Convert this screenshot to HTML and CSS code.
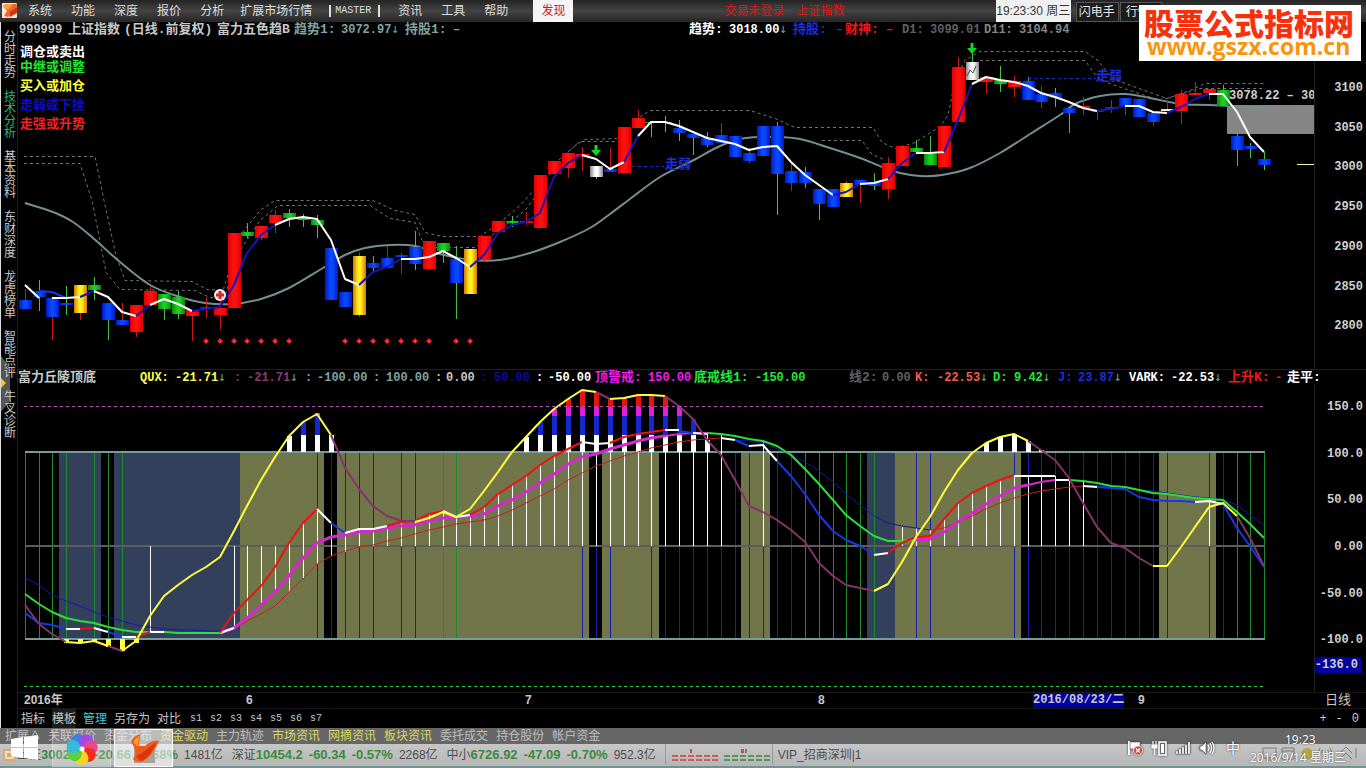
FILE: index.html
```html
<!DOCTYPE html>
<html lang="zh-CN">
<head>
<meta charset="utf-8">
<title>上证指数 日线</title>
<link rel="stylesheet" href="styles.css">
</head>
<body>
<div class="app">
  <header class="menubar">
    <svg class="brand" viewBox="0 0 16 16" aria-hidden="true"><rect width="15" height="15" rx="1" fill="#f6e6dc"/><path d="M1 3 4 1H15L14 9 6 14 2 13 5 8Z" fill="#f0642a"/><path d="M1 4 6 7 11 1 4 1Z" fill="#ffa03b"/><path d="M8 9 15 4V10L8 14Z" fill="#d63215"/></svg>
    <nav class="menu">
      <button>系统</button><button>功能</button><button>深度</button><button>报价</button><button>分析</button><button>扩展市场行情</button><button class="master">MASTER</button><button>资讯</button><button>工具</button><button>帮助</button><button class="found">发现</button>
      <span class="login first">交易未登录</span><span class="login">上证指数</span>
      <time class="now">19:23:30 周三</time>
      <button class="boxed">闪电手</button><button class="boxed">行情</button>
    </nav>
  </header>

  <aside class="watermark"><b>股票公式指标网</b><a href="#site">www.gszx.com.cn</a></aside>

  <div class="body">
    <nav class="side">
      <button>分时走势</button><button class="on">技术分析</button><button>基本资料</button><button>东财深度</button><button>龙虎榜单</button><button>智能点评</button><button>牛叉诊断</button>
      <span class="handle"></span>
    </nav>
    <main class="content">
      <div class="readout price-cols">
        <span>999999</span><span class="cj">上证指数</span><span class="cj">(日线.前复权)</span><span class="cj">富力五色趋B</span>
        <span class="cj teal">趋势1:</span><span class="teal">3072.97<i>↓</i></span><span class="cj teal">持股1:</span><span class="teal">–</span>
        <span class="cj white">趋势:</span><span class="white">3018.00<i>↓</i></span><span class="cj blue">持股:</span><span class="blue">–</span><span class="cj red">财神:</span><span class="red">–</span>
        <span class="dim">D1:</span><span class="dim">3099.01</span><span class="grey">D11:</span><span class="grey">3104.94</span>
      </div>
      <svg id="price" class="chart" viewBox="18 38 1348 332" role="img" aria-label="日线K线图"></svg>
      <div class="readout ind-cols">
        <span class="cj">富力丘陵顶底</span><span class="yellow">QUX:</span><span class="yellow">-21.71<i>↓</i></span><span class="plum">:</span><span class="plum">-21.71<i>↓</i></span><span class="teal">:</span><span class="teal">-100.00</span><span class="teal">:</span><span class="teal">100.00</span><span>:</span><span>0.00</span><span class="navy">:</span><span class="navy">50.00</span><span class="white">:</span><span class="white">-50.00</span>
        <span class="cj magenta">顶警戒:</span><span class="magenta">150.00</span><span class="cj green">底戒线1:</span><span class="green">-150.00</span><span class="cj dim">线2:</span><span class="dim">0.00</span><span class="coral">K:</span><span class="coral">-22.53<i>↓</i></span><span class="green">D:</span><span class="green">9.42<i>↓</i></span><span class="blue">J:</span><span class="blue">23.87<i>↓</i></span><span class="white">VARK:</span><span class="white">-22.53<i>↓</i></span><span class="cj red">上升K:</span><span class="red">-</span><span class="cj white">走平:</span>
      </div>
      <svg id="indicator" class="chart" viewBox="18 385 1348 307" role="img" aria-label="富力丘陵顶底指标"></svg>
      <div class="dates">
        <span>2016年</span><span>6</span><span>7</span><span>8</span><span class="picked">2016/08/23/二</span><span>9</span><span class="period">日线</span>
      </div>
      <div class="tabs">
        <nav class="tabset"><button>指标</button><button class="lit">模板</button><button class="cyan">管理</button><button>另存为</button><button>对比</button><button class="s">s1</button><button class="s">s2</button><button class="s">s3</button><button class="s">s4</button><button class="s">s5</button><button class="s">s6</button><button class="s">s7</button></nav>
        <div class="zoomers"><button>+</button><button>-</button><button>0</button></div>
      </div>
    </main>
  </div>

  <nav class="links">
    <button>扩展∧</button><button>关联报价</button><button>资金分布</button><button class="hot">资金驱动</button><button>主力轨迹</button><button class="hot">市场资讯</button><button class="hot">网摘资讯</button><button class="hot">板块资讯</button><button>委托成交</button><button>持仓股份</button><button>帐户资金</button>
  </nav>
  <footer class="status">
    <svg class="folder" viewBox="0 0 15 14" aria-hidden="true"><rect x="1" y="1" width="13" height="12" fill="#d2ac74"/><rect x="4" y="4" width="7" height="6" fill="none" stroke="#f1dcb8" stroke-width="2"/></svg>
    <span>上证</span><b>3002.85</b><b>-20.66</b><b>-0.68%</b><span>1481亿</span>
    <span>深证</span><b>10454.2</b><b>-60.34</b><b>-0.57%</b><span>2268亿</span>
    <span>中小</span><b>6726.92</b><b>-47.09</b><b>-0.70%</b><span>952.3亿</span>
    <svg id="meter" class="meter" viewBox="0 0 106 20" aria-hidden="true"></svg>
    <span>VIP_招商深圳|1</span>
  </footer>
  <div class="edge"></div>

  <div class="taskbar">
    <button class="start" aria-label="开始"><svg viewBox="0 0 28 26"><path d="M0 4 12 2V12H0ZM13 2 27 0V12H13ZM0 13H12V23L0 21ZM13 13H27V25L13 23Z" fill="#fff"/></svg></button>
    <button class="task" aria-label="浏览器"><svg viewBox="-16 -16 32 32"><path d="M0 0C-13-2-13-12-5-15C3-16 5-9 0 0" fill="#3d7de8"/><path d="M0 0C-13-2-13-12-5-15C3-16 5-9 0 0" fill="#a04be8" transform="rotate(51)"/><path d="M0 0C-13-2-13-12-5-15C3-16 5-9 0 0" fill="#e8478a" transform="rotate(103)"/><path d="M0 0C-13-2-13-12-5-15C3-16 5-9 0 0" fill="#f02a1d" transform="rotate(154)"/><path d="M0 0C-13-2-13-12-5-15C3-16 5-9 0 0" fill="#fbd51c" transform="rotate(206)"/><path d="M0 0C-13-2-13-12-5-15C3-16 5-9 0 0" fill="#5fd03a" transform="rotate(257)"/><path d="M0 0C-13-2-13-12-5-15C3-16 5-9 0 0" fill="#37b9d8" transform="rotate(309)"/><circle r="2.5" fill="#fff"/></svg></button>
    <button class="task active" aria-label="行情软件"><svg viewBox="0 0 32 32"><path d="M6 13H27V30H6Z" fill="#a9a29c"/><path d="M3 9C5 4 9 2 12 1L11 13L17 13C21 9 26 7 31 8C27 18 20 27 13 29C9 29 6 28 5 26C8 22 9 17 3 9Z" fill="#ef5a16"/><path d="M8 23C15 20 22 14 28 9C25 18 19 26 13 28Z" fill="#d93609"/><path d="M5 9C7 6 9 4 11 3L10 14Z" fill="#ff9a2b"/></svg></button>
    <div class="tray">
      <svg viewBox="0 0 16 16"><path d="M2 1V15" stroke="#fff" stroke-width="2"/><path d="M3 2H13V9H3Z" fill="#fff" stroke="#555" stroke-width=".6"/><circle cx="11" cy="10.500" r="4.500" fill="#c8452c" stroke="#fff" stroke-width=".8"/><path d="m9 8.500 4 4m0-4-4 4" stroke="#fff" stroke-width="1.400"/></svg>
      <svg viewBox="0 0 16 16"><path d="M2 1V5M5 1V5M1 5H6V8H1ZM3.500 8V15" fill="#fff" stroke="#fff" stroke-width="1.200"/><rect x="8" y="2" width="7" height="13" fill="#666" stroke="#fff" stroke-width="1.600"/><rect x="10" y="4" width="3" height="9" fill="#fff"/></svg>
      <svg viewBox="0 0 16 16"><path d="M1 14V11H3V14ZM4 14V9H6V14ZM7 14V7H9V14ZM10 14V5H12V14ZM13 14V2H15V14Z" fill="#fff" stroke="#555" stroke-width=".3"/></svg>
      <svg viewBox="0 0 16 16"><path d="M1 6H3L7 2V14L3 10H1Z" fill="#fff" stroke="#555" stroke-width=".6"/><path d="M9 5Q11 8 9 11M11 3Q14 8 11 13M13 2Q17 8 13 14" fill="none" stroke="#fff" stroke-width="1.200"/></svg>
      <span class="ime">中</span>
    </div>
    <div class="clock">
      <svg class="ghost" viewBox="0 0 96 16" aria-hidden="true"><g fill="none" stroke="#7b7b7b"><path d="M1 2H14V12H1ZM4 14H11M20 2H32V13H20ZM20 5H32M78 7 84 1 90 7M78 13 84 7 90 13M94 2V12M63 5V14"/><path d="M58 2Q55 6 58 9M68 2Q71 6 68 9M60 4V8M66 4V8" stroke="#6f8a4c"/></g><circle cx="45" cy="8" r="6" fill="#b5a645"/></svg>
      <time class="hour">19:23</time><time class="day">2016/9/14 星期三</time>
    </div>
  </div>
</div>
<script src="chart.js"></script>
</body>
</html>
```
FILE: styles.css
```css
* { box-sizing: border-box; }
body { margin: 0; background: #000; color: #c8c8c8; font: 12px/16px "Liberation Sans", "Noto Sans CJK SC", sans-serif; }
button { margin: 0; padding: 0; border: 0; background: none; color: inherit; font: inherit; white-space: nowrap; text-align: left; }
a { color: inherit; text-decoration: none; }
.app { position: relative; min-height: 100vh; overflow: hidden; }

.menubar { display: flex; height: 22px; padding-left: 2px; background: linear-gradient(#242424, #444 50%, #252525); }
.brand { width: 16px; height: 16px; margin: 3px 10px 0 0; flex: none; }
.menu { display: grid; flex: 1; min-width: 0; line-height: 22px; color: #dcdcdc; grid-template-columns: 43fr 43fr 43fr 43fr 40fr 89fr 69fr 43fr 43fr 49fr 40fr 223fr 199fr 75fr 48fr 247fr; }
.menu > * { min-width: 0; white-space: nowrap; }
.menu .master { width: 51px; height: 12px; margin-top: 5px; padding: 0 4px; border: solid #ddd; border-width: 0 2px; font: 10px/12px "Liberation Mono", monospace; }
.menu .found { background: #f4f4f4; color: #d51515; text-align: center; }
.menu .login { color: #d81818; }
.menu .first { padding-left: 151px; }
.menu .now { background: #f1f1f1; color: #333; text-align: center; }
.menu .boxed { height: 20px; margin: 2px 0 0 5px; border: 1px solid #555; line-height: 18px; padding: 0 2px; background: #1c1c1c; color: #e8e8e8; }
.menu .boxed:last-child { margin-left: 1px; width: 42px; padding-left: 5px; }

.watermark { position: absolute; z-index: 3; top: 5px; right: 5px; width: 222px; height: 56px; padding: 2px 0 0 5px; background: #fff; color: #f9300c; white-space: nowrap; }
.watermark b { display: block; height: 28px; font: 900 30px/30px "Noto Sans CJK SC", sans-serif; }
.watermark a { display: block; padding-left: 3px; color: #f7950e; font: 700 23px/22px "Open Sans", sans-serif; }

.body { display: flex; }
.side { position: relative; z-index: 0; flex: none; display: flex; flex-direction: column; gap: 12px; width: 18px; padding: 9px 0 0 3px; border-left: 1px solid #ddd; border-right: 1px solid #202020; }
.side button { width: 12px; white-space: normal; word-break: break-all; line-height: 12px; }
.side .on { color: #35b479; }
.handle { position: absolute; z-index: -1; left: 0; top: 334px; width: 9px; height: 56px; background: #555; clip-path: polygon(0 0, 100% 20%, 100% 80%, 0 100%); }
.handle::after { content: ""; position: absolute; top: 22px; border: 5px solid transparent; border-left-color: #ffc21c; }
.content { flex: 1; min-width: 0; }
.chart { display: block; width: 100%; height: auto; }
.chart text { font: bold 12px "Liberation Mono", "Noto Sans CJK SC", monospace; fill: #d0d0d0; }
.chart .cjk { font-size: 13px; }
.chart .axis { text-anchor: end; }

.readout { display: grid; height: 16px; padding-left: 1px; font: bold 12px/16px "Liberation Mono", "Noto Sans CJK SC", monospace; color: #c8c8c8; }
.readout > * { min-width: 0; white-space: nowrap; }
.readout i { font: normal 13px/12px "DejaVu Sans Mono", monospace; color: #4fa98a; }
.readout .cj { font-size: 13px; }
.price-cols { grid-template-columns: 49fr 56fr 93fr 77fr 47fr 64fr 48fr 236fr 40fr 64fr 43fr 9fr 41fr 16fr 28fr 54fr 35fr 347fr; }
.ind-cols { height: 15px; padding-left: 0; grid-template-columns: 122fr 35fr 59fr 13fr 58fr 12fr 56fr 13fr 49fr 11fr 34fr 14fr 42fr 12fr 47fr 53fr 46fr 61fr 94fr 33fr 33fr 22fr 56fr 21fr 44fr 20fr 51fr 42fr 57fr 47fr 12fr 79fr; }
.teal { color: #7fa3a3; }
.white { color: #fff; }
.blue { color: #1c2ee0; }
.navy { color: #0a0aa0; }
.red { color: #f01818; }
.dim { color: #606060; }
.grey { color: #858585; }
.yellow { color: #ffff50; }
.plum { color: #8a3d70; }
.magenta { color: #f01cf0; }
.green { color: #22e83a; }
.coral { color: #f45a4a; }

.dates { display: grid; height: 16px; padding-left: 6px; border-top: 1px solid #181818; font: bold 12px/14px "Liberation Sans", "Noto Sans CJK SC", sans-serif; grid-template-columns: 222fr 279fr 293fr 215fr 105fr 187fr 41fr; }
.dates > * { min-width: 0; white-space: nowrap; }
.dates .picked { justify-self: start; background: #0000a0; font-family: "Liberation Mono", "Noto Sans CJK SC", monospace; }
.dates .period { font-weight: 400; font-size: 13px; }
.tabs { display: flex; justify-content: space-between; height: 20px; line-height: 18px; border-top: 1px solid #181818; }
.tabset { display: flex; gap: 7px; padding-left: 3px; }
.tabset .lit { background: #1c1c1c; }
.tabset .cyan { color: #3fc8dc; }
.tabset .s { width: 13px; padding-left: 2px; font: 10px/18px "Liberation Mono", monospace; }
.zoomers { display: flex; gap: 9px; padding-right: 7px; font: 12px/16px "Liberation Mono", monospace; }

.links { display: flex; gap: 8px; height: 16px; padding-left: 5px; background: #666; color: #bdbdbd; line-height: 14px; }
.links button:first-child { width: 35px; }
.links .hot { color: #d8d860; }
.status { display: flex; height: 22px; padding-left: 2px; background: linear-gradient(#c6c6c6, #b6b6b6); color: #4c4c4c; line-height: 22px; white-space: nowrap; }
.status b { margin-right: 6px; color: #3c8a3c; font-size: 13px; }
.status span { margin-right: 9px; }
.status span:has(+ b) { margin-right: 0; }
.folder { width: 15px; height: 14px; margin-top: 4px; flex: none; }
.meter { width: 108px; height: 20px; margin-right: 5px; flex: none; border: solid #999; border-width: 0 1px; }
.edge { height: 2px; background: #739292; }

.taskbar { position: absolute; left: 0; right: 0; bottom: 0; display: flex; height: 40px; }
.start { width: 28px; margin-left: 11px; padding-top: 4px; }
.start svg { width: 28px; height: 26px; }
.task { width: 59px; height: 38px; margin: 1px 0 0 13px; border: 1px solid #ffffff50; background: #ffffff30; text-align: center; }
.task svg { width: 32px; height: 32px; margin-top: 3px; }
.task.active { margin-left: 3px; border-color: #fff; background: #ffffff90; }
.tray { display: flex; align-items: center; gap: 8px; margin-left: auto; margin-right: 10px; }
.tray svg { width: 16px; height: 16px; filter: drop-shadow(0 0 1px #333); }
.ime { margin-left: 3px; font-size: 14px; color: #fff; text-shadow: 0 0 2px #222; }
.clock { position: relative; width: 116px; padding-top: 3px; color: #fff; text-shadow: 0 0 2px #444; font: 12px/18px "Open Sans", "Noto Sans CJK SC", sans-serif; }
.clock time { display: block; position: relative; white-space: nowrap; }
.clock .hour { padding-left: 35px; }
.ghost { position: absolute; left: 12px; top: 18px; width: 96px; height: 16px; }
```
FILE: chart.js
```js
const STEP = 13.93, X0 = 24.6;
const X = i => Math.round(X0 + STEP * i);
const rect = (x, y, w, h, fill) => `<rect x="${x}" y="${y}" width="${w}" height="${h}" fill="${fill}"/>`;
const path = (d, stroke, w = 1, extra = '') => `<path d="${d}" fill="none" stroke="${stroke}" stroke-width="${w}" ${extra}/>`;
const text = (x, y, s, fill, cls = '') => `<text x="${x}" y="${y}" class="${cls}"${fill ? ` style="fill:${fill}"` : ''}>${s}</text>`;
const poly = (pts, stroke, w, extra) => path('M' + pts.map(p => p.join(' ')).join('L'), stroke, w, extra);

function smooth(p, stroke, w) {
  let d = `M${p[0].join(' ')}`;
  for (let i = 0; i < p.length - 1; i++) {
    const a = p[i - 1] || p[i], b = p[i], c = p[i + 1], e = p[i + 2] || c;
    d += `C${b[0] + (c[0] - a[0]) / 6} ${b[1] + (c[1] - a[1]) / 6} ${c[0] - (e[0] - b[0]) / 6} ${c[1] - (e[1] - b[1]) / 6} ${c[0]} ${c[1]}`;
  }
  return path(d, stroke, w);
}
const runs = (list, w) => list.map(([color, start, ys]) =>
  poly(ys.map((y, k) => [X(start + k), y]), color, w, 'stroke-linejoin="round"')).join('');

const W = '#fff', N = '#1a12b4', R = '#f01010', B = '#1838e8', Y = '#ffff40', P = '#843468', M = '#d428cc', G = '#28e038';

/* body colour, body top, body bottom, wick colour, wick top, wick bottom */
const candles = `b 300 309 r 289 309|b 291 297 g 280 311|b 298 317 r 298 340|b 303 305 g 286 315|y 285 313 r 285 320|g 285 290 g 277 300|b 303 320 g 303 340|b 320 325 r 303 325|r 305 332 r 305 337|r 291 305 r 287 305
g 294 309 g 294 320|g 297 314 g 291 319|r 310 316 r 310 341|b 307 309 r 297 318|r 308 315 r 300 330|r 233 308 r 233 308|g 232 236 g 223 238|r 226 238 r 226 240|r 215 223 r 210 233|g 213 218 g 209 227
g 218 220 g 214 227|g 220 225 g 215 238|b 248 300 b 248 300|b 292 307 b 292 307|y 256 315 r 252 317|b 263 268 g 256 272|b 258 268 r 246 268|b 255 257 r 253 274|b 247 264 g 231 270|r 241 269 r 241 269
g 243 251 g 243 263|b 259 283 g 246 319|y 249 294 y 249 294|r 236 260 r 236 262|r 221 232 r 221 232|g 221 223 g 216 227|r 221 223 r 212 225|r 175 228 r 175 228|r 161 174 r 161 174|r 153 168 r 153 178
r 154 157 r 147 171|w 166 177 g 166 179|b 169 172 r 148 172|r 127 173 r 127 173|r 118 128 r 110 128|g 122 123 g 122 137|g 122 123 g 116 132|b 128 133 g 120 141|b 134 138 g 134 155|b 138 145 g 132 147
b 135 143 r 123 143|b 136 157 b 136 157|b 153 161 r 148 163|b 126 156 b 126 156|b 126 174 g 122 215|b 171 183 r 162 191|b 172 183 g 167 188|b 189 204 g 189 220|b 189 207 r 189 207|y 183 197 r 181 197
b 180 185 r 180 203|b 182 186 g 173 190|r 163 189 r 157 199|r 146 166 r 146 166|g 148 152 g 140 152|g 154 165 g 136 165|r 126 167 r 126 167|r 67 122 r 57 122|w 62 80 g 53 80|r 77 82 r 77 94
g 80 84 g 66 92|r 81 87 r 76 97|b 81 100 g 77 100|b 94 102 r 86 108|b 93 98 g 88 107|b 108 113 g 108 133|r 106 108 r 97 115|b 111 112 r 111 120|b 107 109 r 100 113|b 98 106 r 98 115
b 99 117 b 99 117|b 113 122 r 113 126|c 109 111 r 100 111|r 94 111 r 90 124|r 93 95 r 82 95|r 89 93 r 89 100|g 90 106 g 85 106|b 136 150 g 133 166|b 146 149 g 143 158|b 159 165 g 152 170`.split(/[|\n]/);

function price() {
  const wick = { r: '#c81818', g: '#4ac04a', b: '#0838ff', y: '#e8a010' };
  let s = `<defs>${[['b', '#0018c8', '#0848ff'], ['r', '#e00000', '#ff1010'], ['g', '#088808', '#18d020'], ['y', '#d87800', '#fff020'], ['w', '#888', '#fff'], ['c', '#eda', '#fec']]
    .map(([k, a, m]) => `<linearGradient id="k${k}"><stop stop-color="${a}"/><stop offset=".4" stop-color="${m}"/><stop offset=".6" stop-color="${m}"/><stop offset="1" stop-color="${a}"/></linearGradient>`).join('')}
    <clipPath id="plot"><rect x="18" y="38" width="1296" height="332"/></clipPath></defs>`;
  s += path('M1314.5 38V370M18 369.500H1366', '#202020');
  s += rect(1227, 105, 87, 29, '#858585');
  const dash = 'stroke-dasharray="3 3"';
  [[[24, 156], [95, 156], [104, 200], [116, 255], [125, 280], [192, 281], [207, 289], [223, 290], [240, 235], [260, 210], [275, 200], [373, 200], [395, 210], [415, 214], [425, 232], [442, 236], [480, 236], [500, 222], [520, 205], [538, 185], [555, 165], [575, 145], [585, 139], [622, 138], [638, 118], [650, 110], [750, 110], [775, 118], [795, 127], [873, 127], [882, 142], [895, 148], [915, 142], [940, 126], [948, 115], [955, 80], [965, 60], [980, 51], [1085, 51], [1098, 60], [1112, 78], [1150, 92], [1167, 98], [1190, 90], [1205, 83], [1264, 83]],
   [[24, 163], [80, 163], [92, 200], [98, 230], [106, 272], [120, 289], [195, 290], [210, 297], [224, 298], [240, 250], [260, 220], [278, 205], [370, 205], [390, 218], [415, 222], [422, 240]],
   [[430, 247], [475, 247], [500, 229], [525, 210], [540, 190], [558, 160], [580, 141], [622, 141]],
   [[822, 140], [862, 140], [872, 154], [886, 160]], [[980, 60], [1085, 60], [1098, 78], [1112, 84], [1160, 100], [1200, 88], [1264, 88]]]
    .forEach(p => { s += poly(p.map(([x, y]) => [x, y + 0.5]), '#747474', 1, dash); });
  s += smooth([[25, 203], [53, 212], [73, 222], [93, 238], [120, 262], [150, 285], [180, 297], [205, 303], [233, 304], [261, 299], [289, 288], [323, 268], [345, 255], [365, 248], [390, 245], [415, 246], [440, 254], [470, 260], [500, 260], [530, 253], [560, 242], [590, 228], [610, 214], [630, 199], [660, 177], [690, 162], [720, 146], [745, 138], [775, 137], [800, 139], [830, 148], [860, 158], [885, 168], [900, 173], [920, 176], [942, 175], [970, 168], [1000, 153], [1030, 134], [1060, 115], [1075, 104], [1100, 96], [1125, 94], [1150, 98], [1180, 104], [1210, 105], [1264, 108]], '#748f91', 2);
  candles.forEach((c, i) => {
    const [k, t, b, wk, wt, wb] = c.split(' ');
    s += rect(X(i), wt, 1, wb - wt, wick[wk]) + rect(X(i) - 6, t, 13, b - t, `url(#k${k})`);
  });
  s += runs([[W, 0, [285, 298]], [B, 1, [291, 292, 298]], [W, 2, [298, 298, 297]], [N, 4, [297, 291]], [W, 5, [291, 297, 312, 316]], [N, 8, [316, 305]], [W, 9, [305, 299, 304, 311]], [N, 12, [311, 309, 307, 285, 253, 235, 225]], [W, 18, [225, 219, 217, 219, 240, 279, 285]], [N, 24, [285, 272, 267, 259]], [W, 27, [259, 259, 257, 251, 258, 267]], [N, 32, [267, 255, 233, 225, 222, 213, 177, 163, 155]], [W, 40, [155, 159, 169, 162]], [N, 43, [162, 136]], [W, 44, [136, 122, 122, 126, 132, 138, 141, 144, 150, 147, 146, 162, 175, 185, 195]], [N, 58, [195, 192, 184]], [W, 60, [184, 183, 179]], [N, 62, [179, 163, 153]], [W, 64, [153, 153, 152]], [N, 66, [152, 120, 84]], [W, 68, [84, 77, 80, 82, 86, 93, 97, 102, 108, 111]], [N, 77, [111, 109, 106]], [W, 79, [106, 106, 112, 113]], [N, 82, [113, 107, 99, 94]], [W, 85, [94, 94, 112, 137, 152]]], 2);
  [13, 14, 15, 16, 17, 18, 19, 23, 24, 25, 26, 27, 28, 29, 31, 32].forEach(i => {
    s += `<path d="M${X(i)} 338l3 3-3 3-3-3Z" fill="#ee1c24"/>` + rect(X(i), 341, 1, 1, '#fbb');
  });
  s += `<circle cx="220" cy="295" r="6" fill="#eee"/><path d="M216 295H224M220 291V299" stroke="#e02020" stroke-width="3"/>`;
  [[596, 145], [972, 43]].forEach(([x, y]) => { s += `<path d="M${x - 1.5} ${y}h3v5h3.500l-5 6-5-6h3.500Z" fill="#10d820"/>`; });
  s += path('M967 76 970 70 973 73 976 66', '#444', 1);
  s += poly([[632, 166.5], [664, 166.5]], '#1c2cc0', 1, dash) + text(665, 168, '走弱', '#1c2ce0', 'cjk');
  s += poly([[1028, 78.5], [1096, 78.5]], '#1c2cc0', 1, dash) + text(1096, 80, '走弱', '#1c2ce0', 'cjk');
  s += `<g clip-path="url(#plot)">${text(1229, 99, '3078.22 – 3075')}</g>` + rect(1297, 164, 17, 1, '#f5efb0');
  [['调仓或卖出', 56, '#fff'], ['中继或调整', 71, '#20e830'], ['买入或加仓', 90, '#ffff40'], ['走弱或下挫', 109, '#0c0cc8'], ['走强或升势', 128, '#f02020']]
    .forEach(([t, y, c]) => { s += text(20, y, t, c, 'cjk'); });
  [3100, 3050, 3000, 2950, 2900, 2850, 2800].forEach((v, i) => { s += text(1363, Math.round(91 + i * 39.7), v, '', 'axis'); });
  document.getElementById('price').innerHTML = s;
}

function indicator() {
  const slate = '#33405c', olive = '#707649';
  let s = path('M1314.500 385V692', '#202020');
  [[59, 101, slate], [114, 240, slate], [240, 324, olive], [337, 589, olive], [602, 659, olive], [741, 770, olive], [867, 895, slate], [895, 1021, olive], [1159, 1216, olive]]
    .forEach(([a, b, c]) => { s += rect(a, 453, b - a, 186, c); });
  const bars = (list, color, top = 453) => list.forEach(i => { s += rect(X(i), top, 1, 639 - top, color); });
  bars([0, 1, 2, 3, 5, 6, 7, 30, 31, 56, 57, 58, 59, 60, 61, 87, 88, 89], '#1a8e2c');
  bars([21, 22, 23, 24, 25, 27, 28, 51, 52, 54, 55, 64, 65, 71, 72, 73, 74, 75, 76, 77, 78, 79, 80, 81, 82, 85, 86], '#1820b4');
  bars([40, 41, 42, 45, 46, 47, 48, 49, 50, 53], '#1820b4', 547);
  s += rect(25, 545, 1240, 2, '#5d5d5d') + rect(25, 451, 1240, 2, '#779b9b') + rect(25, 638, 1240, 2, '#779b9b');
  const bar = (i, a, b) => { s += rect(X(i), a, 1, b - a, '#fff'); };
  bar(9, 546, 631);
  [[546, 628], [546, 618], [546, 606], [546, 593], [543, 592], [523, 578], [510, 564], [523, 556], [533, 552]].forEach(([a, b], k) => bar(15 + k, a, b));
  [529, 529, 526, 521, 521, 514, 511, 516, 515, 507, 494, 485, 476, 465, 456, 449, 443, 443, 443, 437, 434, 432, 429, 430, 433, 434, 434].forEach((a, k) => bar(24 + k, a, 546));
  bar(53, 441, 546);
  [527, 528, 530, 519, 503, 493, 486, 480, 475, 476, 476, 476, 480, 481].forEach((a, k) => bar(63 + k, a, 546));
  bar(85, 498, 546);

  const zones = [[435, 452, '#fff'], [416, 435, '#1428cc'], [407, 416, '#dc20dc'], [380, 407, '#e81414']];
  const hill = (start, tops) => tops.forEach((t, k) => zones.forEach(([a, b, c]) => {
    if (t < b) s += rect(X(start + k) - 2, Math.max(a, t), 5, b - Math.max(a, t), c);
  }));
  hill(19, [436, 422, 413, 435]);
  hill(36, [437, 422, 409, 399, 390, 392, 399, 398, 395, 395, 396, 406, 419, 440]);
  hill(69, [443, 437, 434, 441, 450]);
  [643, 643, 642, 647, 651, 643].forEach((b, k) => { s += rect(X(3 + k) - 2, 639, 5, b - 639, Y); });

  s += runs([[N, 0, [578, 585, 595, 601, 606, 612, 617, 621, 625, 627, 629, 630, 630, 631, 631]], ['#c82020', 14, [632, 629, 621, 614, 606, 592, 579, 564, 556, 551, 547, 545, 541, 538, 534, 530, 527, 524, 522, 520, 516, 510, 503, 496, 489, 480, 473, 466, 461, 456, 452, 448, 445, 442, 440, 439, 438]], ['#1018a0', 50, [438, 440, 441, 443, 449, 454, 462, 471, 482, 494, 505, 516, 523, 526, 528, 530]], ['#c82020', 65, [530, 528, 522, 516, 509, 503, 498, 494, 491, 489, 487, 486, 486]], [N, 77, [486, 487, 487, 490, 491, 493, 495, 497, 498, 500, 505, 515, 525]]], 1);
  s += runs([[M, 14, [633, 628, 618, 605, 592, 576, 558, 543, 537, 535, 532, 531, 528, 526, 525, 521, 518, 517, 516, 514, 506, 500, 492, 483, 474, 464, 457, 454, 449, 445, 441, 438, 436]], [M, 64, [540, 539, 532, 522, 513, 504, 496, 488, 485]]], 3);
  s += runs([[G, 0, [594, 604, 612, 618, 621, 623, 627, 630, 632, 632, 632, 633, 633, 633, 633]], [M, 46, [436, 434, 433, 433]], [G, 49, [433, 434, 436, 439, 441, 446, 455, 469, 484, 500, 515, 526, 536, 541, 541, 540]], [M, 72, [485, 482, 480, 480]], [G, 75, [480, 481, 483, 486, 487, 490, 493, 494, 496, 498, 499, 500, 512, 524, 538]]], 2);
  s += runs([[B, 0, [613, 623, 625, 629]], [W, 3, [629, 629]], [R, 4, [629, 628]], [W, 5, [628, 632]], [B, 6, [632, 637]], [W, 7, [637, 637]], [R, 8, [637, 632]], [W, 9, [632, 632]], [W, 14, [633, 628]], [R, 14, [633, 613, 600, 586, 567, 543, 523, 509]], [W, 21, [509, 523]], [B, 22, [523, 533]], [W, 23, [533, 529, 529, 526]], [R, 26, [526, 522, 521, 514, 511]], [W, 30, [511, 517, 515]], [R, 32, [515, 507, 494, 485, 476, 465, 456, 449, 442]], [W, 40, [442, 444, 443]], [R, 42, [443, 437, 434, 432, 430]], [W, 46, [430, 430]], [B, 47, [431, 433]], [W, 48, [433, 434]], [W, 50, [438, 440]], [B, 51, [440, 446]], [W, 52, [446, 445, 461]], [B, 54, [461, 476, 494, 515, 531, 540, 546, 554]], [W, 61, [555, 553]], [R, 62, [553, 543, 537, 536, 519, 503, 493, 486, 480, 475]], [W, 71, [476, 476, 476, 476]], [W, 74, [480, 480]], [W, 76, [486, 487]], [B, 77, [487, 488, 489, 497, 500, 501, 501, 502]], [W, 84, [502, 501, 504]], [B, 86, [504, 528, 546, 567]]], 2);
  s += runs([[P, 0, [605, 624, 634, 642]], [Y, 3, [642, 643, 641, 646]], [P, 6, [646, 651]], [Y, 7, [651, 641, 616, 596, 585, 575, 567, 557, 531, 506, 480, 457, 436, 422, 414, 435]], [P, 22, [435, 468, 489, 506, 516, 521, 521]], [Y, 28, [522, 518, 512, 517, 509, 491, 472, 452, 437, 422, 409, 399, 390, 392]], [P, 41, [392, 399]], [Y, 42, [399, 398, 395, 395, 396]], [P, 46, [396, 406, 419, 440, 455, 480, 506, 512, 520, 530, 542, 563, 576, 585, 588, 591]], [Y, 61, [591, 584, 562, 537, 517, 492, 470, 453, 443, 437, 434, 441]], [P, 72, [441, 450, 460, 478, 503, 527, 543, 548, 558, 566]], [Y, 81, [566, 566, 547, 527, 507, 503, 516]], [P, 87, [516, 538, 566]]], 2);
  s += poly([[24, 406.5], [1264, 406.5]], '#b050b0', 1, 'stroke-dasharray="3 3"');
  s += poly([[24, 686.5], [1264, 686.5]], '#38c840', 1, 'stroke-dasharray="3 3"');
  [['150.0', 410], ['100.0', 457], ['50.00', 503], ['0.00', 550], ['-50.00', 597], ['-100.0', 643]].forEach(([t, y]) => { s += text(1363, y, t, '', 'axis'); });
  s += rect(1315, 657, 47, 16, '#0000a0') + text(1358, 668, '-136.0', '', 'axis');
  document.getElementById('indicator').innerHTML = s;
}

function meter() {
  let s = '';
  for (let k = 0; k < 12; k++) {
    const x = 6 + k * 8 + (k > 5 ? 4 : 0), c = k > 5 ? '#55965b' : '#cf5c5c';
    s += rect(x, 11, 6, 2, c) + rect(x, 15, 6, 2, c);
  }
  s += rect(24, 5, 2, 4, '#c05050') + rect(75, 5, 3, 4, '#c05050') + rect(79, 5, 2, 4, '#55965b');
  document.getElementById('meter').innerHTML = s;
}
price();
indicator();
meter();
```
